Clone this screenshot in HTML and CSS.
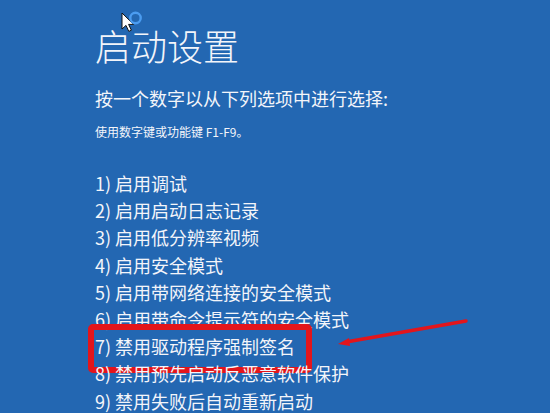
FILE: index.html
```html
<!DOCTYPE html>
<html lang="zh-CN">
<head>
  <meta charset="UTF-8" />
  <meta name="viewport" content="width=device-width, initial-scale=1.0"/>
  <title>启动设置</title>
  <link rel="stylesheet" href="styles.css">
</head>
<body>
  <div class="screen">
    <h1 class="title">启动设置</h1>
    <p class="prompt">按一个数字以从下列选项中进行选择:</p>
    <p class="hint">使用数字键或功能键 F1-F9。</p>

    <ol class="options">
      <li>1) 启用调试</li>
      <li>2) 启用启动日志记录</li>
      <li>3) 启用低分辨率视频</li>
      <li>4) 启用安全模式</li>
      <li>5) 启用带网络连接的安全模式</li>
      <li>6) 启用带命令提示符的安全模式</li>
      <li class="marked">7) 禁用驱动程序强制签名</li>
      <li>8) 禁用预先启动反恶意软件保护</li>
      <li>9) 禁用失败后自动重新启动</li>
    </ol>

    <!-- mouse pointer with busy ring -->
    <svg class="pointer" width="26" height="24" viewBox="0 0 26 24">
      <path d="M1 2 L1 18 L5 14.4 L7.8 20.4 L10.4 19.2 L7.6 13.4 L12.6 13.4 Z" fill="#fff" stroke="#111" stroke-width="1" stroke-linejoin="round"/>
      <circle cx="14.5" cy="7" r="5.2" fill="none" stroke="#4b9cf0" stroke-width="2.4"/>
    </svg>

    <!-- red arrow pointing at option 7 -->
    <svg class="arrow" width="140" height="36" viewBox="0 0 140 36">
      <path d="M132 4 L12 25" stroke="#e3151b" stroke-width="3.4" stroke-linecap="round"/>
      <path d="M4 27 L15 21 L16 29 Z" fill="#e3151b"/>
    </svg>
  </div>
</body>
</html>
```

FILE: styles.css
```css
html, body {
  margin: 0;
  height: 100%;
}

body {
  background-color: #2367b2;
  color: #f3f5fa;
  font-family: "Segoe UI", "Noto Sans CJK SC", "Noto Sans", sans-serif;
  overflow: hidden;
}

.screen {
  position: relative;
  height: 100%;
  padding: 21px 0 0 95px;
  box-sizing: border-box;
}

.title {
  margin: 0;
  font-size: 36px;
  line-height: 48px;
  font-weight: 300;
}

.prompt {
  margin: 15px 0 0;
  font-size: 18px;
  line-height: 28px;
}

.hint {
  margin: 10px 0 0;
  font-size: 12px;
  line-height: 20px;
}

.options {
  list-style: none;
  margin: 28px 0 0;
  padding: 0;
  font-size: 18px;
  line-height: 27.2px;
}

.options li {
  position: relative;
}

/* red frame around the highlighted option */
.options .marked::after {
  content: "";
  position: absolute;
  left: -7px;
  top: -9px;
  width: 212px;
  height: 37px;
  border: 6px solid #e3151b;
  border-radius: 5px;
}

.pointer {
  position: absolute;
  left: 121px;
  top: 11px;
}

.arrow {
  position: absolute;
  left: 334px;
  top: 317px;
}
```
